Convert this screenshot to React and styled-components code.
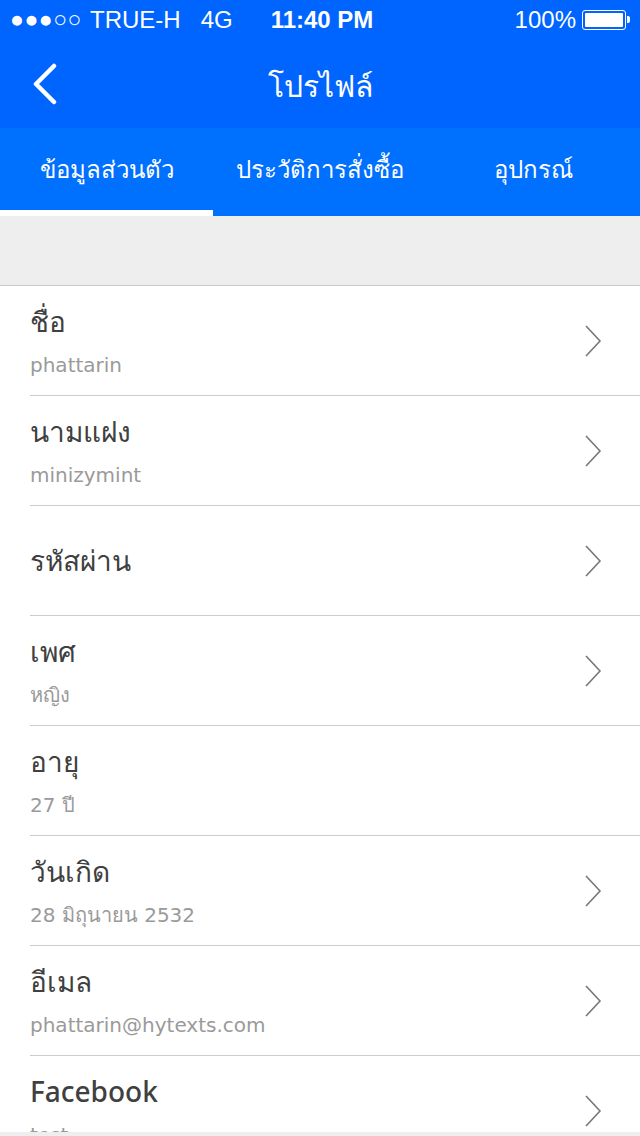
import React from "react";
import styled, { createGlobalStyle } from "styled-components";

const Global = createGlobalStyle`
  html, body { margin: 0; padding: 0; background: #fff; }
  body { font-family: "Noto Sans", "DejaVu Sans", sans-serif; }
  * { box-sizing: border-box; }
`;

const Screen = styled.div`
  width: 640px;
  height: 1136px;
  overflow: hidden;
  display: flex;
  flex-direction: column;
  background: #fff;
  position: relative;
`;

const TopArea = styled.div`
  background: #0064ff;
  color: #fff;
`;

const StatusBar = styled.div`
  height: 40px;
  display: grid;
  grid-template-columns: 1fr auto 1fr;
  align-items: center;
  padding: 0 10px 0 10px;
  font-family: "Liberation Sans", "Helvetica", sans-serif;
  font-size: 24px;
`;

const Carrier = styled.div`
  display: flex;
  align-items: center;
  gap: 20px;
`;

const Dots = styled.span`
  font-size: 23px;
  letter-spacing: 0.5px;
  margin-right: 8px;
  vertical-align: 1px;
`;

const Time = styled.div`
  font-weight: bold;
  padding-left: 4px;
`;

const Right = styled.div`
  display: flex;
  justify-content: flex-end;
  align-items: center;
  gap: 6px;
`;

const Battery = styled.div`
  width: 44px;
  height: 20px;
  border: 1.5px solid #fff;
  border-radius: 3px;
  padding: 2px;
  position: relative;
  margin-right: 4px;
  &::before {
    content: "";
    display: block;
    width: 100%;
    height: 100%;
    background: #fff;
    border-radius: 1px;
  }
  &::after {
    content: "";
    position: absolute;
    right: -5px;
    top: 5px;
    width: 3px;
    height: 7px;
    background: #fff;
    border-radius: 0 2px 2px 0;
  }
`;

const NavBar = styled.div`
  height: 88px;
  display: flex;
  align-items: center;
  justify-content: center;
  position: relative;
`;

const BackButton = styled.div`
  position: absolute;
  left: 30px;
  top: 22px;
  width: 32px;
  height: 44px;
  display: flex;
  align-items: center;
`;

const Title = styled.div`
  font-size: 30px;
  font-weight: 500;
  padding-top: 4px;
`;

const Tabs = styled.div`
  height: 88px;
  background: #0070ff;
  display: grid;
  grid-template-columns: repeat(3, 1fr);
`;

const Tab = styled.div`
  display: flex;
  align-items: center;
  justify-content: center;
  color: #fff;
  font-size: 24px;
  padding-top: 1px;
  border-bottom: 6px solid ${(p) => (p.$active ? "#fff" : "transparent")};
`;

const Spacer = styled.div`
  height: 70px;
  background: #eeeeee;
  border-bottom: 1px solid #c8c8c8;
`;

const List = styled.div`
  flex: 1;
  overflow: hidden;
`;

const Row = styled.div`
  height: 110px;
  margin-left: 30px;
  display: flex;
  align-items: center;
  border-bottom: 1px solid #cccccc;
  padding-right: 38px;
`;

const Texts = styled.div`
  flex: 1;
  display: flex;
  flex-direction: column;
  gap: 10px;
  padding-bottom: 2px;
`;

const Label = styled.div`
  font-size: 28px;
  color: #404040;
  font-weight: 500;
  line-height: 40px;
`;

const Sub = styled.div`
  font-family: "DejaVu Sans", "Noto Sans", sans-serif;
  font-size: 20px;
  color: #9a9a9a;
  line-height: 28px;
`;

const BottomBar = styled.div`
  position: absolute;
  left: 0;
  right: 0;
  bottom: 0;
  height: 4px;
  background: #eeeeee;
`;

const Chevron = () => (
  <svg width="18" height="32" viewBox="0 0 18 32">
    <path d="M2 1 L16 16 L2 31" fill="none" stroke="#777" strokeWidth="1.6" />
  </svg>
);

const rows = [
  { label: "ชื่อ", sub: "phattarin", arrow: true },
  { label: "นามแฝง", sub: "minizymint", arrow: true },
  { label: "รหัสผ่าน", arrow: true },
  { label: "เพศ", sub: "หญิง", arrow: true },
  { label: "อายุ", sub: "27 ปี", arrow: false },
  { label: "วันเกิด", sub: "28 มิถุนายน 2532", arrow: true },
  { label: "อีเมล", sub: "phattarin@hytexts.com", arrow: true },
  { label: "Facebook", sub: "test", arrow: true },
];

export default function App() {
  return (
    <Screen>
      <Global />
      <TopArea>
        <StatusBar>
          <Carrier>
            <span>
              <Dots>●●●○○</Dots>TRUE-H
            </span>
            <span>4G</span>
          </Carrier>
          <Time>11:40 PM</Time>
          <Right>
            <span>100%</span>
            <Battery />
          </Right>
        </StatusBar>
        <NavBar>
          <BackButton>
            <svg width="28" height="42" viewBox="0 0 28 42">
              <path d="M24 3 L6 21 L24 39" fill="none" stroke="#fff" strokeWidth="4.5" strokeLinecap="round" strokeLinejoin="round" />
            </svg>
          </BackButton>
          <Title>โปรไฟล์</Title>
        </NavBar>
      </TopArea>
      <Tabs>
        <Tab $active>ข้อมูลส่วนตัว</Tab>
        <Tab>ประวัติการสั่งซื้อ</Tab>
        <Tab>อุปกรณ์</Tab>
      </Tabs>
      <Spacer />
      <List>
        {rows.map((r) => (
          <Row key={r.label}>
            <Texts>
              <Label>{r.label}</Label>
              {r.sub && <Sub>{r.sub}</Sub>}
            </Texts>
            {r.arrow && <Chevron />}
          </Row>
        ))}
      </List>
      <BottomBar />
    </Screen>
  );
}
